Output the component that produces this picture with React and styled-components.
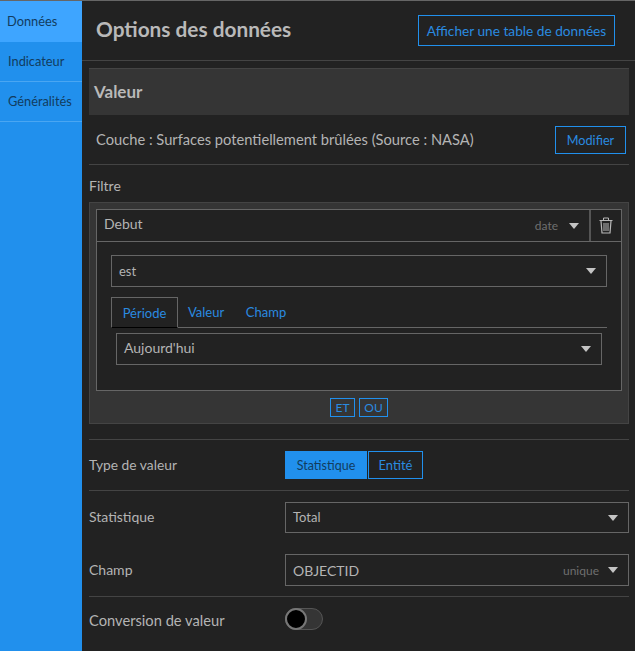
import React from 'react'
import styled, { createGlobalStyle } from 'styled-components'

const GlobalStyle = createGlobalStyle`
    html, body {
        margin: 0;
        padding: 0;
        background: #222222;
    }
    * {
        box-sizing: border-box;
    }
`;

const Page = styled.div`
    display: flex;
    width: 635px;
    height: 651px;
    overflow: hidden;
    background: #222222;
    border-top: 1px solid #666666;
    font-family: Lato, "Liberation Sans", sans-serif;
    font-size: 14px;
    color: #b4b4b4;
`;

const Sidebar = styled.nav`
    flex: 0 0 82px;
    display: flex;
    flex-direction: column;
    background: #2190ed;
`;

const SideItem = styled.div`
    height: ${p => p.$first ? '41px' : '40px'};
    padding: ${p => p.$first ? '12px' : '11px'} 0 0 ${p => p.$first ? '7px' : '8px'};
    font-size: 12.8px;
    line-height: 16px;
    white-space: nowrap;
    color: #123c5e;
    background: ${p => p.$active ? '#3ea5ff' : 'transparent'};
    border-bottom: ${p => p.$active ? 'none' : '1px solid #4aa6f2'};
`;

const Main = styled.main`
    flex: 1;
    min-width: 0;
`;

const Header = styled.header`
    display: flex;
    justify-content: space-between;
    align-items: flex-start;
    height: 60px;
    padding: 14px 20px 0 14px;
    border-bottom: 1px solid #444444;
`;

const Title = styled.h1`
    margin: 2px 0 0;
    font-size: 20.8px;
    line-height: 24px;
    font-weight: 700;
    color: #b9b9b9;
`;

const OutlineButton = styled.button`
    display: flex;
    align-items: center;
    justify-content: center;
    padding: 0;
    width: ${p => p.$w}px;
    height: ${p => p.$h}px;
    font-family: inherit;
    font-size: ${p => p.$size || 14}px;
    color: ${p => p.$solid ? '#123c5e' : '#2a8be0'};
    background: ${p => p.$solid ? '#2190ed' : 'transparent'};
    border: 1px solid #2190ed;
`;

const Content = styled.div`
    padding: 7px 6px 0 7px;
`;

const ValueBand = styled.h2`
    margin: 0;
    height: 47px;
    padding: 12px 0 0 5px;
    font-size: 17px;
    line-height: 22px;
    font-weight: 700;
    color: #b9b9b9;
    background: #353535;
    border-top: 1px solid #444444;
`;

const LayerRow = styled.div`
    display: flex;
    justify-content: space-between;
    align-items: center;
    height: 50px;
    padding: 0 3px 0 7px;
    border-bottom: 1px solid #444444;
    white-space: nowrap;
`;

const Label = styled.span`
    margin-bottom: ${p => p.$lift || 2}px;
    font-size: ${p => p.$size || 14}px;
`;

const FilterLabel = styled.div`
    margin-top: 12px;
    height: 25px;
    line-height: 18px;
`;

const FilterPanel = styled.section`
    padding: 6px;
    height: 222px;
    background: #353535;
    border: 1px solid #444444;
`;

const FilterCard = styled.div`
    height: 182px;
    background: #222222;
    border: 1px solid #666666;
`;

const FilterHead = styled.div`
    display: flex;
    height: 32px;
    border-bottom: 1px solid #666666;
`;

const FieldName = styled.div`
    flex: 1;
    display: flex;
    align-items: center;
    justify-content: space-between;
    padding: 0 10px 0 7px;
`;

const Hint = styled.span`
    margin-left: auto;
    margin-right: ${p => p.$gap}px;
    font-size: 12px;
    color: #6f6f6f;
`;

const DeleteCell = styled.div`
    flex: 0 0 32px;
    display: flex;
    align-items: center;
    justify-content: center;
    border-left: 2px solid #555555;
`;

const FilterBody = styled.div`
    padding: 13px 14px 0;
`;

const SelectBox = styled.div`
    display: flex;
    align-items: center;
    height: ${p => p.$h || 32}px;
    width: 100%;
    padding: 0 ${p => p.$pr || 10}px 0 ${p => p.$pl || 7}px;
    border: 1px solid #666666;
`;

const SelectText = styled.span`
    font-size: ${p => p.$size || 14}px;
    margin-bottom: ${p => p.$lift || 0}px;
`;

const Caret = styled.span`
    margin-left: ${p => p.$inline ? '0' : 'auto'};
    width: 0;
    height: 0;
    border-left: 5.5px solid transparent;
    border-right: 5.5px solid transparent;
    border-top: 6px solid #c4c4c4;
`;

const Tabs = styled.div`
    display: flex;
    height: 31px;
    margin-top: 10px;
    border-bottom: 1px solid #666666;
`;

const Tab = styled.div`
    display: flex;
    align-items: center;
    justify-content: center;
    height: ${p => p.$active ? '31px' : '30px'};
    width: ${p => p.$w}px;
    font-size: 13px;
    color: #2a8be0;
    border: ${p => p.$active ? '1px solid #666666' : 'none'};
    border-bottom: ${p => p.$active ? '1px solid #000000' : 'none'};
`;

const TabPanel = styled.div`
    padding: 5px 5px 0;
`;

const LogicRow = styled.div`
    display: flex;
    justify-content: center;
    gap: 4px;
    margin-top: 7px;
`;

const SettingRow = styled.div`
    display: grid;
    grid-template-columns: 196px 344px;
    align-items: center;
    height: ${p => p.$h}px;
    margin-top: ${p => p.$mt || 0}px;
    border-bottom: ${p => p.$line ? '1px solid #444444' : 'none'};
    border-top: ${p => p.$top ? '1px solid #444444' : 'none'};
`;

const SegmentGroup = styled.div`
    display: flex;
    gap: 1px;
`;

const Toggle = styled.div`
    position: relative;
    width: 38px;
    height: 22px;
    margin-bottom: 4px;
    background: #353535;
    border: 1px solid #555555;
    border-radius: 11px;
`;

const Knob = styled.span`
    position: absolute;
    left: -1px;
    top: -1px;
    width: 22px;
    height: 22px;
    background: #000000;
    border: 2px solid #777777;
    border-radius: 50%;
`;

function TrashIcon() {
    return (
        <svg width="14" height="17" viewBox="0 0 14 17" fill="none" stroke="#b8b8b8" strokeWidth="1">
            <path d="M0.5 3.5h13" />
            <path d="M4.5 3V1h5v2" />
            <path d="M2 4l1 12h8l1-12" strokeWidth="1.2" />
            <path d="M5 6v8M7 6v8M9 6v8" />
        </svg>
    )
}

function App() {
    return (
        <Page>
            <GlobalStyle />
            <Sidebar>
                <SideItem $active $first>Données</SideItem>
                <SideItem>Indicateur</SideItem>
                <SideItem>Généralités</SideItem>
            </Sidebar>
            <Main>
                <Header>
                    <Title>Options des données</Title>
                    <OutlineButton $w={197} $h={31} $size={13.7}>Afficher une table de données</OutlineButton>
                </Header>
                <Content>
                    <ValueBand>Valeur</ValueBand>
                    <LayerRow>
                        <Label $size={14.7}>Couche : Surfaces potentiellement brûlées (Source : NASA)</Label>
                        <OutlineButton $w={71} $h={28} $size={12.7}>Modifier</OutlineButton>
                    </LayerRow>
                    <FilterLabel>Filtre</FilterLabel>
                    <FilterPanel>
                        <FilterCard>
                            <FilterHead>
                                <FieldName>
                                    <Label $lift={4}>Debut</Label>
                                    <Hint $gap={11}>date</Hint>
                                    <Caret $inline />
                                </FieldName>
                                <DeleteCell><TrashIcon /></DeleteCell>
                            </FilterHead>
                            <FilterBody>
                                <SelectBox>
                                    <SelectText $size={13}>est</SelectText>
                                    <Caret />
                                </SelectBox>
                                <Tabs>
                                    <Tab $active $w={67}>Période</Tab>
                                    <Tab $w={56}>Valeur</Tab>
                                    <Tab $w={64}>Champ</Tab>
                                </Tabs>
                                <TabPanel>
                                    <SelectBox>
                                        <SelectText $lift={3}>Aujourd'hui</SelectText>
                                        <Caret />
                                    </SelectBox>
                                </TabPanel>
                            </FilterBody>
                        </FilterCard>
                        <LogicRow>
                            <OutlineButton $w={25} $h={19} $size={12}>ET</OutlineButton>
                            <OutlineButton $w={29} $h={19} $size={12}>OU</OutlineButton>
                        </LogicRow>
                    </FilterPanel>
                    <SettingRow $h={52} $line $top $mt={15}>
                        <Label $size={13.8}>Type de valeur</Label>
                        <SegmentGroup>
                            <OutlineButton $w={82} $h={28} $size={12.5} $solid>Statistique</OutlineButton>
                            <OutlineButton $w={55} $h={28} $size={13}>Entité</OutlineButton>
                        </SegmentGroup>
                    </SettingRow>
                    <SettingRow $h={53}>
                        <Label>Statistique</Label>
                        <SelectBox $h={31}>
                            <SelectText $size={13} $lift={2}>Total</SelectText>
                            <Caret />
                        </SelectBox>
                    </SettingRow>
                    <SettingRow $h={53} $line>
                        <Label>Champ</Label>
                        <SelectBox>
                            <SelectText>OBJECTID</SelectText>
                            <Hint $gap={9}>unique</Hint>
                            <Caret $inline />
                        </SelectBox>
                    </SettingRow>
                    <SettingRow $h={48}>
                        <Label $size={14.7}>Conversion de valeur</Label>
                        <Toggle><Knob /></Toggle>
                    </SettingRow>
                </Content>
            </Main>
        </Page>
    )
}

export default App
